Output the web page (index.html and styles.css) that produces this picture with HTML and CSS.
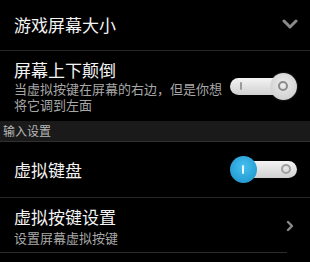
FILE: index.html
```html
<!DOCTYPE html>
<html lang="zh">
<head>
<meta charset="utf-8">
<link rel="stylesheet" href="styles.css">
</head>
<body>
<div class="list">
  <div class="row row-first">
    <div class="texts"><div class="title">游戏屏幕大小</div></div>
    <svg class="chev-down" width="16" height="10" viewBox="0 0 16 10"><polyline points="2,2 8,8 14,2" fill="none" stroke="#8a8a8a" stroke-width="3" stroke-linecap="round" stroke-linejoin="round"/></svg>
  </div>
  <div class="row row-two">
    <div class="texts">
      <div class="title">屏幕上下颠倒</div>
      <div class="sub">当虚拟按键在屏幕的右边，但是你想<br>将它调到左面</div>
    </div>
    <div class="switch off">
      <div class="track"><span class="mark-i"></span></div>
      <div class="knob"><span class="ring"></span></div>
    </div>
  </div>
  <div class="section">输入设置</div>
  <div class="row row-three">
    <div class="texts"><div class="title">虚拟键盘</div></div>
    <div class="switch on">
      <div class="track"><span class="ring"></span></div>
      <div class="knob"><span class="mark-i"></span></div>
    </div>
  </div>
  <div class="row row-four">
    <div class="texts">
      <div class="title">虚拟按键设置</div>
      <div class="sub">设置屏幕虚拟按键</div>
    </div>
    <svg class="chev-right" width="10" height="12" viewBox="0 0 10 12"><polyline points="3,2 7,6 3,10" fill="none" stroke="#8a8a8a" stroke-width="2.4" stroke-linecap="round" stroke-linejoin="round"/></svg>
  </div>
</div>
</body>
</html>
```
FILE: styles.css
```css
html, body {
  margin: 0;
  padding: 0;
  background: #000;
}
body {
  width: 310px;
  height: 262px;
  overflow: hidden;
  font-family: "Noto Sans CJK SC", "Noto Sans", sans-serif;
  color: #f2f2f2;
}
.list {
  display: flex;
  flex-direction: column;
}
.row {
  display: flex;
  align-items: center;
  justify-content: space-between;
  padding: 0 13px 0 14px;
  border-bottom: 1px solid #262626;
}
.row-first { height: 50px; }
.row-two { height: 70px; border-bottom: none; }
.row-three { height: 55px; }
.row-four { height: 54px; margin-right: 23px; padding-right: 0; border-bottom-color: #2c2c2c; }
.row-four .chev-right { margin-right: -8px; margin-top: 2px; }
.texts {
  display: flex;
  flex-direction: column;
}
.title {
  font-size: 17px;
  line-height: 20px;
  color: #f4f4f4;
}
.sub {
  font-size: 13px;
  line-height: 16px;
  color: #a8a8a8;
  margin-top: 1px;
}
.row-two .texts { margin-top: 0; }
.row-four .texts { margin-top: 2px; }
.row-four .sub { margin-top: 3px; }
.chev-down { margin-top: -3px; margin-right: -1px; }
.section {
  height: 20px;
  background: #1a1a1a;
  border-bottom: 1px solid #303030;
  font-size: 12px;
  line-height: 20px;
  color: #b8b8b8;
  padding-left: 3px;
}
.switch {
  position: relative;
  width: 67px;
  height: 27px;
  flex: none;
}
.track {
  position: absolute;
  top: 5px;
  height: 17px;
  border-radius: 9px;
  background: linear-gradient(#f4f4f4, #d0d0d0);
}
.off .track { left: 0; right: 12px; }
.on .track { left: 14px; right: 0; }
.knob {
  position: absolute;
  top: 0;
  width: 27px;
  height: 27px;
  border-radius: 50%;
}
.off .knob {
  right: 0;
  background: radial-gradient(circle at 50% 40%, #ececec, #c8c8c8);
  box-shadow: 0 0 2px rgba(255,255,255,0.3);
}
.on .knob {
  left: 0;
  background: radial-gradient(circle at 50% 40%, #45c0f0, #1b8fc8);
}
.mark-i {
  position: absolute;
  width: 2px;
  height: 8px;
  border-radius: 1px;
}
.off .mark-i { left: 10px; top: 4px; background: #9a9a9a; }
.on .mark-i { left: 12px; top: 9px; background: #e8f8ff; height: 9px; }
.ring {
  position: absolute;
  width: 6px;
  height: 6px;
  border-radius: 50%;
  border: 2px solid #8c8c8c;
}
.off .ring { left: 8px; top: 8px; }
.on .ring { right: 6px; top: 3px; border-color: #a0a0a0; }
```
